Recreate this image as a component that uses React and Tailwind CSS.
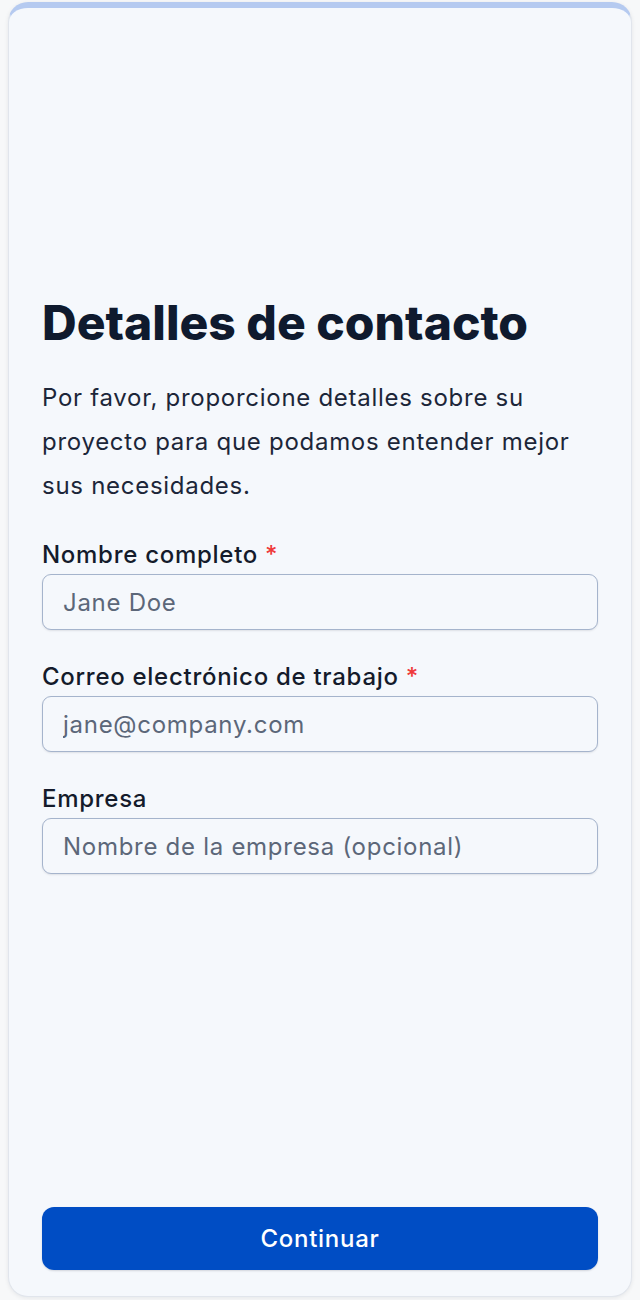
import React from 'react';

const fields = [
  { label: 'Nombre completo', placeholder: 'Jane Doe', required: true, type: 'text' },
  { label: 'Correo electrónico de trabajo', placeholder: 'jane@company.com', required: true, type: 'email' },
  { label: 'Empresa', placeholder: 'Nombre de la empresa (opcional)', required: false, type: 'text' },
];

const App = () => {
  return (
    <div className="min-h-[1300px] bg-[#f7f8f9] px-2 pt-[2px] pb-[3px] flex" style={{ fontFamily: 'Inter, "Noto Sans", sans-serif' }}>
      <div className="flex-1 flex flex-col rounded-[20px] border border-[#e1e5ec] border-t-[6px] border-t-[#b5caf0] bg-[#f5f8fc] shadow-[0_1px_4px_rgba(15,23,42,0.08)]">
        {/* Content */}
        <div className="flex-1 px-[33px] pt-[289px]">
          <h1 className="text-[48px] leading-[52px] font-extrabold text-[#0f1a2e] mb-[27px]">
            Detalles de contacto
          </h1>
          <p className="text-[24px] leading-[44px] tracking-[0.03em] text-[#1c2639]">
            Por favor, proporcione detalles sobre su proyecto para que podamos entender mejor sus necesidades.
          </p>

          <form className="mt-8 flex flex-col gap-8" onSubmit={(e) => e.preventDefault()}>
            {fields.map((f) => (
              <div key={f.label} className="flex flex-col">
                <label className="text-[24px] leading-[30px] tracking-[0.03em] font-medium text-[#141b2b] mb-1">
                  {f.label}
                  {f.required && <span className="text-[#ef3a3a]"> *</span>}
                </label>
                <input
                  type={f.type}
                  placeholder={f.placeholder}
                  className="h-[56px] w-full rounded-[9px] border-[1.5px] border-[#a5b4cc] bg-[#f5f8fc] px-5 text-[24px] tracking-[0.03em] text-[#1c2639] placeholder:text-[#5c6779] shadow-[0_1px_2px_rgba(15,23,42,0.1)] outline-none"
                />
              </div>
            ))}
          </form>
        </div>

        {/* Footer */}
        <div className="px-[33px] pb-[26px]">
          <button className="w-full h-[63px] rounded-[12px] bg-[#004dc4] text-white text-[24px] tracking-[0.03em] font-medium shadow-[0_1px_2px_rgba(15,23,42,0.15)]">
            Continuar
          </button>
        </div>
      </div>
    </div>
  );
};

export default App;
